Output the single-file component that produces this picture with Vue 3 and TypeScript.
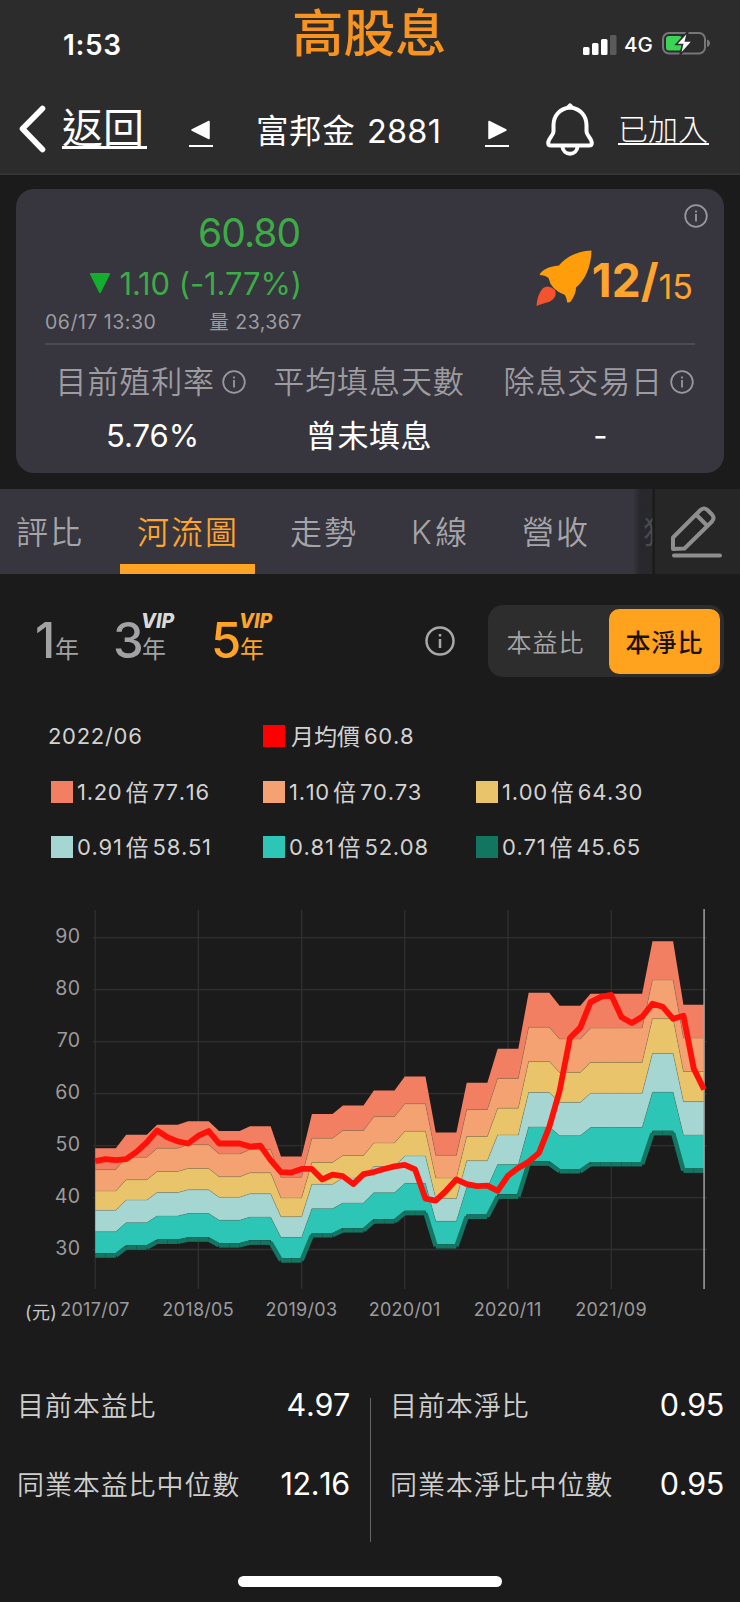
<script setup lang="ts">
interface Band { label: string; value: string; color: string; ratio: number }

const bands: Band[] = [
  { label: '1.20', value: '77.16', color: '#f37f63', ratio: 1 },
  { label: '1.10', value: '70.73', color: '#f4a271', ratio: 0.9167 },
  { label: '1.00', value: '64.30', color: '#e9c46b', ratio: 0.8333 },
  { label: '0.91', value: '58.51', color: '#a5d6d1', ratio: 0.7583 },
  { label: '0.81', value: '52.08', color: '#2dc6b6', ratio: 0.675 },
  { label: '0.71', value: '45.65', color: '#12755f', ratio: 0.5916 },
]

// Upper band price for each quarter; every quarter spans three months
const quarters: number[] = [
  49.5, 52.1, 54.0, 54.7, 52.8, 53.7, 47.9, 56.1, 57.7, 60.6,
  63.3, 52.5, 62.1, 68.65, 79.4, 76.9, 79.2, 79.2, 89.3, 77.1,
]
// Monthly average price
const prices: number[] = [
  47.0, 47.4, 47.2, 47.4, 48.8, 50.6, 52.9, 51.6, 50.8, 50.4, 51.9, 52.8, 50.4, 50.4, 50.4,
  49.8, 50.0, 47.2, 44.9, 44.8, 45.5, 45.5, 43.5, 44.4, 44.1, 42.6, 44.5, 44.9, 45.5, 46.0,
  46.3, 45.4, 39.8, 39.4, 41.3, 43.5, 42.6, 42.2, 42.3, 41.3, 44.2, 45.7, 46.9, 48.6, 53.6,
  60.5, 70.7, 72.7, 77.6, 78.6, 79.0, 74.7, 73.6, 74.8, 77.3, 76.7, 74.4, 75.0, 64.8, 60.8,
]

const px = (i: number): number => 95.2 + i * 10.32
const py = (v: number): number => 47.7 + (90 - v) * 5.197
const level = (i: number, ratio: number): number => (quarters[Math.floor(i / 3)] ?? 0) * ratio

const areas = bands.slice(0, 5).map((b, n) => {
  const low = bands[n + 1]?.ratio ?? 0
  const top = prices.map((_, i) => `${px(i)},${py(level(i, b.ratio))}`)
  const bottom = prices.map((_, i) => `${px(i)},${py(level(i, low))}`).reverse()
  return { color: b.color, points: [...top, ...bottom].join(' ') }
})
const edges = bands.slice(1, 5).map((b) =>
  prices.map((_, i) => `${px(i)},${py(level(i, b.ratio))}`).join(' '),
)
const baseline = prices.slice(1).map((_, i) => ({
  x1: px(i), y1: py(level(i, 0.5916)) + 2.3,
  x2: px(i + 1), y2: py(level(i + 1, 0.5916)) + 2.3,
}))
const pricePath = prices.map((v, i) => `${px(i)},${py(v)}`).join(' ')

const yTicks = [90, 80, 70, 60, 50, 40, 30]
const xTicks = ['2017/07', '2018/05', '2019/03', '2020/01', '2020/11', '2021/09']
</script>

<template>
  <div class="screen">
    <header class="top">
      <div class="status">
        <span class="clock">1:53</span>
        <span class="title">高股息</span>
        <svg class="signal" width="36" height="22" viewBox="0 0 36 22">
          <rect x="0" y="13" width="6.500" height="8" rx="1.5" fill="#fff" />
          <rect x="9" y="9" width="6.500" height="12" rx="1.5" fill="#fff" />
          <rect x="18" y="5" width="6.500" height="16" rx="1.5" fill="#fff" />
          <rect x="27" y="1" width="6.500" height="20" rx="1.5" fill="#5a5a5a" />
        </svg>
        <span class="net">4G</span>
        <svg class="battery" width="50" height="26" viewBox="0 0 50 26">
          <rect x="1" y="2" width="42" height="20.5" rx="6" fill="none" stroke="#77777a" stroke-width="2" />
          <path d="M45 8.5q3 1 3 3.8t-3 3.8z" fill="#77777a" />
          <rect x="4" y="5" width="16" height="14.500" rx="3" fill="#3bd556" />
          <path d="M26 .5L14 13.500h6.500l-2.500 10.500L30.500 10h-7z" fill="#fff" stroke="#2c2c2c" stroke-width="1.6" />
        </svg>
      </div>
      <nav class="nav">
        <svg class="chevron" width="30" height="50" viewBox="0 0 30 50"><path d="M25.500 4.500L5.500 24.800L25.500 45.500" fill="none" stroke="#fff" stroke-width="5.6" stroke-linecap="round" stroke-linejoin="round" /></svg>
        <span class="back">返回</span>
        <span class="step prev"><svg width="20" height="22" viewBox="0 0 20 22"><path d="M1 11L18 2.500V19.500Z" fill="#fff" stroke="#fff" stroke-width="1.500" stroke-linejoin="round" /></svg></span>
        <span class="stock">富邦金 <span>2881</span></span>
        <span class="step next"><svg width="20" height="22" viewBox="0 0 20 22"><path d="M19 11L2 2.500V19.500Z" fill="#fff" stroke="#fff" stroke-width="1.500" stroke-linejoin="round" /></svg></span>
        <svg class="bell" width="50" height="54" viewBox="0 0 50 54" fill="none" stroke="#fff" stroke-width="4" stroke-linejoin="round">
          <path d="M25 4.500C14 5.500 8.500 13.500 8.500 22V28.500C8.500 32.500 3.200 35.500 3.200 40Q3.200 42.500 6 42.500H44Q46.800 42.500 46.800 40C46.800 35.500 41.500 32.500 41.500 28.500V22C41.500 13.500 36 5.500 25 4.500Z" />
          <path d="M22 4.500L25 1.500L28 4.500" stroke-width="2.500" />
          <path d="M17.500 43.500C18 53 32 53 32.500 43.500" />
        </svg>
        <span class="joined">已加入</span>
      </nav>
    </header>

    <section class="card">
      <svg class="info corner" viewBox="0 0 24 24"><circle cx="12" cy="12" r="10.800" /><path d="M12 10v7.500M12 6.500v2" /></svg>
      <div class="quote">
        <div class="figures">
          <div class="price">60.80</div>
          <div class="change">
            <svg width="22" height="22" viewBox="0 0 22 22"><path d="M2 2H20L11 20Z" fill="#14ae2e" stroke="#14ae2e" stroke-width="2" stroke-linejoin="round" /></svg>
            <span>1.10 (-1.77%)</span>
          </div>
          <div class="meta"><span class="when">06/17 13:30</span><span class="vol">量 23,367</span></div>
        </div>
        <div class="score">
          <svg width="58" height="58" viewBox="0 0 58 58">
            <path d="M55.500 .5C39 1 28 9 23 15.500Q7 17 3.500 25Q9 25 12.500 28Q15 40 29 45Q31 49 31 52Q33 53.500 35 51Q40 44 40 37.500C50 29 55 16 55.500 .5Z" fill="#ff9d0a" />
            <path d="M.5 56Q1 45 7 38Q13 34 19 40Q22 47 14 51.500Q7 53.500 .5 56Z" fill="#f4532f" />
          </svg>
          <span class="big">12/</span><span class="small">15</span>
        </div>
      </div>
      <div class="facts">
        <div class="fact f1">
          <div class="name">目前殖利率<svg class="info" viewBox="0 0 24 24"><circle cx="12" cy="12" r="10.800" /><path d="M12 10v7.500M12 6.500v2" /></svg></div>
          <div class="val">5.76%</div>
        </div>
        <div class="fact f2">
          <div class="name">平均填息天數</div>
          <div class="val cjk">曾未填息</div>
        </div>
        <div class="fact f3">
          <div class="name">除息交易日<svg class="info" viewBox="0 0 24 24"><circle cx="12" cy="12" r="10.800" /><path d="M12 10v7.500M12 6.500v2" /></svg></div>
          <div class="val">-</div>
        </div>
      </div>
    </section>

    <div class="tabs">
      <div class="scroller">
        <span class="tab t1">評比</span>
        <span class="tab t2 active">河流圖</span>
        <span class="tab t3">走勢</span>
        <span class="tab t4">K線</span>
        <span class="tab t5">營收</span>
        <span class="tab t6">獲</span>
        <i class="fade"></i>
      </div>
      <div class="edit">
        <svg width="54" height="54" viewBox="0 0 54 54" fill="none" stroke="#8e8e8e" stroke-width="4" stroke-linejoin="round" stroke-linecap="round">
          <path d="M4 45V33.500L31.500 6Q35 3 38.500 6L43 10.500Q46 14 43 17.500L15.500 44.500Z" />
          <path d="M27.500 11L38 21.500M5 51.500H51" />
        </svg>
      </div>
    </div>

    <div class="controls">
      <div class="period y1"><span class="num">1</span><span class="unit">年</span></div>
      <div class="period y3"><span class="num">3</span><span class="unit">年</span><b class="vip">VIP</b></div>
      <div class="period y5"><span class="num">5</span><span class="unit">年</span><b class="vip">VIP</b></div>
      <svg class="info large" viewBox="0 0 30 30"><circle cx="15" cy="15" r="13.500" /><path d="M15 13v9M15 8v2.500" /></svg>
      <div class="switch"><span>本益比</span><span class="on">本淨比</span></div>
    </div>

    <div class="legend">
      <span class="date">2022/06</span>
      <span class="item wide"><i class="red"></i><u class="avg">月均價</u>60.8</span>
      <span v-for="b in bands" :key="b.label" class="item"><i :style="{ background: b.color }"></i>{{ b.label }}<u>倍</u>{{ b.value }}</span>
    </div>

    <svg class="chart" width="740" height="440" viewBox="0 0 740 440">
      <g stroke="#303032" stroke-width="1.300">
        <line v-for="t in yTicks" :key="t" x1="93" x2="707" :y1="py(t)" :y2="py(t)" />
        <line v-for="(t, i) in xTicks" :key="t" :x1="px(i * 10)" :x2="px(i * 10)" y1="20" y2="399" />
      </g>
      <polygon v-for="a in areas" :key="a.color" :points="a.points" :fill="a.color" />
      <polyline v-for="(e, i) in edges" :key="i" :points="e" fill="none" stroke="#6b6a55" stroke-opacity=".5" stroke-width=".6" />
      <line v-for="(s, i) in baseline" :key="i" v-bind="s" stroke="#147563" stroke-width="4.500" />
      <line :x1="px(59)" :x2="px(59)" y1="19" y2="399" stroke="#a2a2a2" stroke-width="1.500" />
      <polyline :points="pricePath" fill="none" stroke="#ff1109" stroke-width="5.800" stroke-linejoin="round" />
      <g class="ylab"><text v-for="t in yTicks" :key="t" x="80.500" :y="py(t) + 5.500">{{ t }}</text></g>
      <g class="xlab"><text v-for="(t, i) in xTicks" :key="t" :x="px(i * 10) - .2" y="425.500">{{ t }}</text></g>
      <text class="yuan" x="25" y="429">(元)</text>
    </svg>

    <section class="stats">
      <div class="col">
        <p><span>目前本益比</span><b>4.97</b></p>
        <p><span>同業本益比中位數</span><b>12.16</b></p>
      </div>
      <div class="col right">
        <p><span>目前本淨比</span><b>0.95</b></p>
        <p><span>同業本淨比中位數</span><b>0.95</b></p>
      </div>
    </section>
    <div class="home"></div>
  </div>
</template>

<style>
body { background: #1b1b1b; }
</style>

<style scoped>
* { box-sizing: border-box; }
.screen { width: 740px; height: 1602px; overflow: hidden; background: #1b1b1b; color: #fff; font-family: Inter, "Noto Sans CJK TC", sans-serif; font-weight: 400; white-space: nowrap; }
svg { display: block; flex: none; }
.top { height: 175px; background: #2c2c2c; border-bottom: 2px solid #343435; }
.status { height: 88px; display: flex; align-items: center; }
.clock { margin: 1px 0 0 63px; width: 229px; font-size: 28px; font-weight: 600; letter-spacing: .6px; }
.title { width: 291px; font-size: 51.500px; line-height: 60px; font-weight: 500; color: #f8931f; position: relative; top: -11px; }
.signal { margin-top: 1px; }
.net { width: 36px; margin: 1px 0 0 5px; font-size: 20.500px; font-weight: 500; }
.battery { margin-left: 2px; }
.nav { height: 85px; display: flex; align-items: center; font-weight: 300; }
.chevron { margin: -3px 0 0 17px; }
.back { width: 85px; margin-left: 15px; height: 42px; font-size: 41px; line-height: 42px; border-bottom: 3px solid #fff; margin-top: -6px; font-weight: 400; }
.step { width: 24px; height: 28px; border-bottom: 2px solid #fff; margin-top: 4px; }
.prev { margin-left: 42px; padding-left: 2px; }
.next { padding-left: 2px; }
.stock { margin: -5px 0 0 43px; width: 229px; font-size: 32.500px; font-weight: 400; letter-spacing: .6px; }
.stock span { margin-left: 2px; letter-spacing: .2px; }
.bell { margin: -1px 0 0 36px; }
.joined { margin-left: 23px; width: 91px; font-size: 30px; line-height: 32px; height: 32px; border-bottom: 2px solid #fff; margin-top: -3px; }

.card { position: relative; width: 708px; height: 284px; margin: 14px 0 0 16px; border-radius: 18px; background: #37353d; padding: 0 29px; }
.info { width: 24px; height: 24px; fill: none; stroke: #98989c; stroke-width: 1.800; }
.corner { position: absolute; right: 16px; top: 15px; }
.quote { height: 156px; display: flex; justify-content: space-between; border-bottom: 2px solid #4b4a50; }
.figures { width: 257px; padding-top: 19px; text-align: right; color: #3dab48; }
.price { font-size: 39px; line-height: 50px; letter-spacing: -1px; padding-right: 2px; }
.change { height: 50px; display: flex; align-items: center; justify-content: flex-end; gap: 8px; font-size: 31px; letter-spacing: -.1px; }
.meta { display: flex; justify-content: space-between; font-size: 19.500px; line-height: 28px; color: #9d9ca1; letter-spacing: .5px; }
.score { display: flex; height: 60px; margin-top: 61px; padding-right: 2px; color: #ffa42c; align-items: baseline; }
.score svg { align-self: flex-start; margin-right: 2px; }
.big { margin-left: -4px; font-size: 46px; line-height: 60px; font-weight: 700; }
.small { font-size: 34px; font-weight: 400; position: relative; top: 2px; }
.facts { display: flex; }
.fact { padding-top: 12px; text-align: center; }
.f1 { width: 215px; }
.f2 { width: 218px; }
.f3 { width: 217px; }
.name { display: flex; align-items: center; justify-content: center; height: 44px; font-size: 31px; letter-spacing: .9px; font-weight: 350; color: #9d9ca1; }
.name .info { margin: 5px 0 0 7px; }
.f1 .name, .f3 .name { justify-content: flex-end; }
.f1 .name { padding-right: 14px; }
.f3 .name { padding-right: 1px; }
.f3 .val { padding-left: 28px; }
.cjk { letter-spacing: .6px; }
.val { height: 46px; margin-top: 12px; font-size: 31px; line-height: 46px; }

.tabs { display: flex; margin-top: 16px; height: 85px; }
.scroller { position: relative; width: 655px; height: 85px; overflow: hidden; display: flex; background: #37353d; }
.tab { flex: none; line-height: 87px; font-size: 32px; letter-spacing: 2px; color: #a5a4a9; font-weight: 350; }
.t1 { width: 104px; margin-left: 16px; }
.t2 { width: 135px; padding-left: 17px; border-bottom: 10px solid #ffa425; }
.active { color: #ffa42c; }
.t3 { margin-left: 35px; width: 121px; }
.t4 { width: 111px; letter-spacing: 3.500px; }
.t5 { width: 121px; }
.fade { position: absolute; right: 0; top: 0; width: 22px; height: 85px; background: linear-gradient(90deg, rgba(35,34,37,0), rgba(35,34,37,.75) 35%, rgba(33,33,34,.65) 86%, #1b1b1b 90%); }
.edit { width: 85px; background: #262626; padding: 15px 0 0 14px; }

.controls { display: flex; height: 133px; position: relative; align-items: center; }
.period { position: relative; display: flex; align-items: baseline; color: #a2a2a4; line-height: 60px; width: 98px; margin-top: 9px; }
.y1 { margin-left: 35px; width: 79px; }
.y3 { width: 98px; }
.y5 { width: 212px; color: #ffa425; }
.num { font-size: 49px; font-weight: 500; width: 28px; letter-spacing: -1px; text-indent: -1px; }
.y1 .num { width: 20px; text-indent: 0; }
.unit { font-size: 24px; }
.vip { position: absolute; left: 27px; top: -5px; line-height: 30px; font-size: 19.500px; font-weight: 800; font-style: italic; color: #d9d9d9; }
.y5 .vip { color: #ffa425; }
.large { width: 30px; height: 30px; stroke: #a8a8a8; stroke-width: 2.500; margin-left: 1px; }
.switch { display: flex; margin-left: 33px; width: 236px; height: 72px; padding: 4px; border-radius: 15px; background: #2d2d2e; }
.switch span { flex: 1; font-size: 25px; letter-spacing: 1px; font-weight: 350; line-height: 68px; padding-right: 10px; text-align: center; color: #a5a5a5; }
.switch .on { flex: none; width: 111px; height: 65px; padding: 0; color: #1b1206; background: #ffa31f; border-radius: 10px; font-weight: 500; }

.legend { display: grid; grid-template-columns: 212px 213px 240px; grid-template-rows: 56px 55px 55px; padding: 1px 0 0 51px; height: 183px; align-items: center; font-size: 22px; letter-spacing: .7px; font-kerning: none; color: #d2d2d2; }
.legend > * { display: flex; align-items: center; }
.date { margin-left: -3px; }
.wide { grid-column: 2 / 4; }
.item i { width: 22px; height: 22px; margin-right: 4px; }
.item .red { background: #f00; margin-right: 6px; }
.item u { text-decoration: none; font-size: 23px; margin: -2px 4px 0 3px; letter-spacing: 0; }
.item .avg { margin: -2px 4px 0 0; }

.chart text { fill: #9b9b9e; font-size: 19.500px; letter-spacing: .4px; }
.ylab { text-anchor: end; }
.chart .xlab text { text-anchor: middle; font-size: 18px; letter-spacing: .3px; }
.chart .yuan { font-size: 18px; fill: #c5c5c5; }

.stats { display: flex; height: 244px; padding: 45px 0 0 17px; }
.col { width: 354px; height: 169px; padding-right: 21px; }
.col:first-child { position: relative; }
.col:first-child::after { content: ""; position: absolute; right: 0; top: 23px; width: 1.500px; height: 144px; background: #656565; }
.right { padding: 0 1px 0 19px; }
.col p { display: flex; justify-content: space-between; align-items: center; height: 79px; margin: 0; padding-bottom: 20px; }
.col span { font-size: 27px; letter-spacing: .9px; font-weight: 350; color: #cfcfcf; }
.col b { font-weight: 400; font-size: 30.500px; font-kerning: none; letter-spacing: -.3px; }
.home { width: 264px; height: 11px; border-radius: 6px; background: #fff; margin: 2px 0 0 238px; }
</style>
